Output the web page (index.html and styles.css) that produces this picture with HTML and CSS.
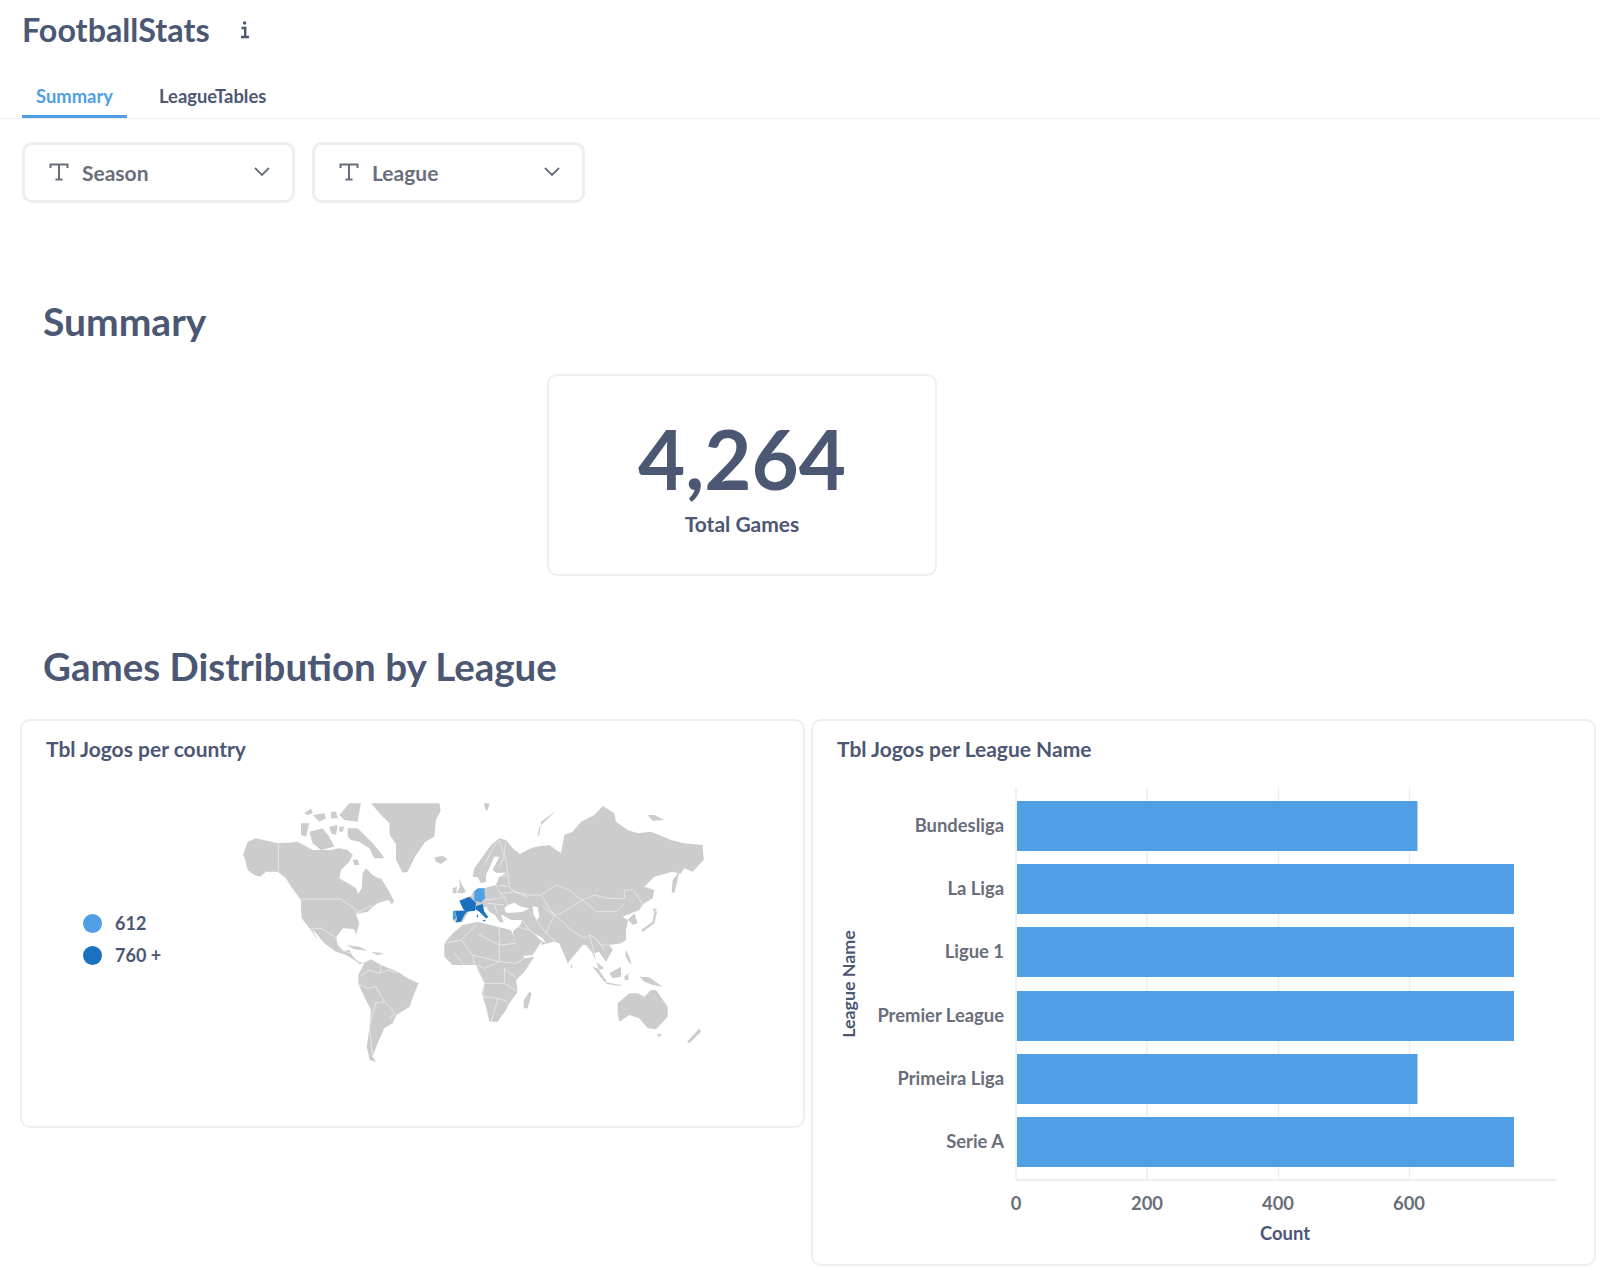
FILE: index.html
```html
<!DOCTYPE html>
<html lang="en">
<head>
<meta charset="utf-8">
<title>FootballStats</title>
<link rel="stylesheet" href="styles.css">
</head>
<body>
<header class="head">
  <div class="title-row">
    <h1 class="title">FootballStats</h1>
    <svg class="info" viewBox="0 0 10 18" width="10" height="18"><circle cx="4.6" cy="2" r="1.7"/><path d="M1.5 7H5.2V15.5M1 16H9" /></svg>
  </div>
  <nav class="tabs">
    <a class="tab active">Summary</a>
    <a class="tab">LeagueTables</a>
  </nav>
</header>
<section class="filters">
  <div class="filter">
    <svg class="t-icon" viewBox="0 0 20 18" width="20" height="18"><path d="M1.500 5V1.500H18.500V5M10 1.500V16.500M6.500 16.500H13.500"/></svg>
    <span class="filter-label">Season</span>
    <svg class="chev" viewBox="0 0 16 9" width="16" height="9"><path d="M1 1L8 8L15 1"/></svg>
  </div>
  <div class="filter">
    <svg class="t-icon" viewBox="0 0 20 18" width="20" height="18"><path d="M1.500 5V1.500H18.500V5M10 1.500V16.500M6.500 16.500H13.500"/></svg>
    <span class="filter-label">League</span>
    <svg class="chev" viewBox="0 0 16 9" width="16" height="9"><path d="M1 1L8 8L15 1"/></svg>
  </div>
</section>
<h2 class="section first">Summary</h2>
<div class="kpi-row">
  <div class="kpi">
    <div class="kpi-num">4,264</div>
    <div class="kpi-label">Total Games</div>
  </div>
</div>
<h2 class="section second">Games Distribution by League</h2>
<div class="cards">
  <article class="card map-card">
    <h3 class="card-title">Tbl Jogos per country</h3>
    <div class="map-body">
      <ul class="legend">
        <li class="legend-row"><span class="dot light"></span>612</li>
        <li class="legend-row"><span class="dot dark"></span>760 +</li>
      </ul>
      <svg class="map" viewBox="0 0 1500 870" width="500" height="290">
        <g class="land">
          <!-- North America -->
          <path d="M80 185L105 175L170 190L200 188L230 185L275 210L330 210L355 205L380 210L395 225L385 245L360 270L355 295L390 315L405 325L412 342L422 325L425 280L435 265L455 285L472 295L480 295L505 335L520 365L500 360L470 370L455 380L440 395L405 402L415 430L405 465L412 476L398 447L366 445L346 470L350 495L366 512L385 510L395 528L412 546L430 548L415 552L400 540L375 525L345 515L310 490L285 460L272 445L292 482L268 448L242 415L240 385L240 360L210 320L195 295L170 275L135 275L90 315L118 290L100 285L80 270L70 230L66 225Z"/>
          <!-- Arctic Canada -->
          <path d="M380 145L410 145L455 190L480 220L490 235L460 235L445 205L415 185L390 180L380 170Z"/>
          <path d="M265 155L305 145L325 170L340 200L300 210L275 190Z"/>
          <path d="M240 130L265 130L255 170L240 165Z"/>
          <path d="M250 100L270 85L275 100L260 105Z"/>
          <path d="M275 105L310 100L315 115L295 125Z"/>
          <path d="M330 95L345 95L350 115L330 115Z"/>
          <path d="M385 70H420L415 95L410 125L370 120L355 105Z"/>
          <path d="M325 140L350 135L345 165L330 160Z"/>
          <path d="M355 140L370 140L365 155L355 155Z"/>
          <path d="M395 240L410 238L415 255L400 255Z"/>
          <path d="M500 355L520 365L512 372Z"/>
          <!-- Greenland, Iceland, Svalbard -->
          <path d="M450 70H655L659 92L645 120L640 170L612 186L582 230L560 275L545 278L525 240L525 192L506 165L505 130L480 105Z"/>
          <path d="M640 232L665 228L680 238L660 252L645 245Z"/>
          <path d="M788 70H806L800 90L795 92Z"/>
          <!-- South America -->
          <path d="M430 548L450 538L480 555L530 575L560 595L593 610L580 640L566 680L526 705L515 730L490 745L470 790L455 830L466 846L446 840L437 800L446 740L450 690L430 650L412 612L412 585Z"/>
          <!-- Caribbean -->
          <path d="M375 495L415 500L440 512L400 508Z"/><path d="M450 515L490 520L470 526Z"/>
          <!-- Eurasia -->
          <path d="M695 395L740 388L715 363L750 348L760 330L790 325L825 315L835 290L845 285L855 278L825 278L815 270L835 230L820 230L795 285L795 305L780 310L770 292L755 290L760 265L785 230L810 195L835 175L855 180L875 205L900 225L880 245L870 250L900 220L930 205L945 200L985 195L1020 220L1030 165L1055 155L1080 125L1120 105L1145 78L1180 100L1185 125L1220 150L1250 160L1290 155L1315 165L1350 180L1390 190L1445 195L1448 240L1415 275L1390 265L1378 282L1355 275L1300 290L1270 320L1300 330L1295 355L1270 370L1255 390L1205 410L1220 420L1240 400L1250 430L1235 435L1222 420L1215 450L1215 480L1200 490L1165 495L1175 510L1155 545L1140 525L1135 515L1120 520L1125 545L1150 565L1135 570L1115 520L1095 495L1085 495L1040 550L1015 490L1000 485L960 495L965 480L935 525L905 528L885 498L875 455L900 432L902 420L870 420L845 405L840 405L848 428L835 425L822 405L805 395L795 380L770 385L745 392L740 400L725 425L705 428L695 420Z"/>
          <!-- Africa -->
          <path d="M670 490L695 460L725 435L770 425L830 440L870 450L885 490L910 535L940 530L910 575L885 600L890 635L865 670L855 690L830 725L805 725L795 680L782 640L790 610L772 575L765 555L730 555L695 555L670 530Z"/>
          <path d="M925 635L932 640L920 685L908 685L908 660Z"/>
          <!-- British Isles -->
          <path d="M715 295L722 312L735 335L725 340L708 338L716 322Z"/><path d="M695 325L708 320L706 340L695 340Z"/>
          <!-- Asia islands -->
          <path d="M1375 275L1360 340L1352 335L1355 300Z"/>
          <path d="M1260 450L1295 425L1300 395L1308 395L1300 430L1265 455Z"/>
          <path d="M1295 385L1308 388L1300 398Z"/>
          <path d="M1115 560L1130 565L1158 605L1150 605Z"/>
          <path d="M1165 580L1200 560L1200 590L1175 595Z"/>
          <path d="M1155 607L1200 615L1200 618L1155 612Z"/>
          <path d="M1210 590L1222 580L1222 600L1212 600Z"/>
          <path d="M1255 590L1285 592L1325 620L1295 615L1270 605Z"/>
          <path d="M1215 510L1225 530L1232 555L1222 545L1213 525Z"/>
          <path d="M1280 105L1300 105L1330 120L1295 122Z"/>
          <path d="M950 170L955 140L1005 92L960 125L955 165Z"/>
          <path d="M1050 552L1056 560L1050 565Z"/>
          <!-- Oceania -->
          <path d="M1190 670L1225 640L1250 640L1270 650L1290 630L1305 630L1340 680L1340 710L1305 748L1280 745L1255 715L1225 705L1195 725L1190 700Z"/>
          <path d="M1308 762L1322 762L1315 772Z"/>
          <path d="M1435 745L1440 755L1405 790L1398 785L1420 762Z"/>
        </g>
        <g class="holes">
          <path d="M850 385L860 375L880 368L900 380L925 385L905 395L875 398L855 398Z"/>
          <path d="M935 378L950 382L955 410L948 420L938 405Z"/>
          <path d="M940 460L965 475L975 490L955 478Z"/>
        </g>
        <g class="borders">
          <path d="M172 190V275M240 357H360L405 390V400L455 375M270 445H300L340 470L366 512M366 512L395 522"/>
          <path d="M415 590L445 570L475 580L500 570L530 578M440 625L465 620L490 665L515 690L522 705M465 665L445 740L455 830M490 665L465 670M412 612L440 625M480 555L478 580M505 715L520 705"/>
          <path d="M790 255L815 205L835 180L850 230L835 260M855 180L850 215L860 270L865 320L880 335"/>
          <path d="M825 315L838 340L850 350L860 375M790 360L835 355L850 350M800 370L850 375M820 375L830 400M840 290L860 285M835 315L860 320M840 340L880 335L920 350"/>
          <path d="M880 335L925 345L960 345L1005 315L1045 330L1075 355L1085 360L1120 345L1160 355L1210 355L1210 330L1235 330L1265 370L1255 395M1085 360L1125 395L1185 395L1210 370M1085 360L1060 375L1020 400L1000 405L1020 420L1050 450L1090 475L1105 465L1125 475L1140 495L1165 495M1000 405L975 460L1005 485M945 420L960 440L975 460M965 380L1000 405M905 420L925 450L945 465M885 440L925 450M960 345L985 385L1000 405M1105 465L1120 520M1125 475L1150 510"/>
          <path d="M670 490L720 480L755 525L760 555M720 480L770 430M775 465L835 495L885 490M835 440V545L790 565L770 555M755 525L835 545L885 550L910 535M765 555L790 610L850 610L890 635M790 610L785 650L830 655L860 665M830 655L820 695L810 725M850 610V565L885 595M700 520L730 555"/>
        </g>
        <g class="hi-dark">
          <path d="M715 362L745 350L765 368L762 392L735 395L725 385Z"/>
          <path d="M765 378L785 372L790 395L802 412L795 415L775 395L763 388Z"/>
          <path d="M785 420H794L790 425Z"/><path d="M768 400L772 412L767 412Z"/>
          <path d="M702 392L740 392L730 405L720 425L705 427L708 415Z"/>
        </g>
        <g class="hi-light">
          <path d="M760 335L770 325L790 325L792 355L780 367L760 362Z"/>
          <path d="M696 392L702 392L706 416L696 420Z"/>
        </g>
      </svg>
    </div>
  </article>
  <article class="card bar-card">
    <h3 class="card-title">Tbl Jogos per League Name</h3>
    <svg class="bars" viewBox="812 770 783 495" width="783" height="495">
      <g class="grid">
        <path d="M1016 788V1180M1147 788V1180M1278.500 788V1180M1409.500 788V1180"/>
        <path class="axis" d="M1016 1181H1556"/>
      </g>
      <g class="bar-fill">
        <rect x="1017" y="802" width="400.500" height="50"/>
        <rect x="1017" y="865" width="497" height="50"/>
        <rect x="1017" y="928" width="497" height="50"/>
        <rect x="1017" y="992" width="497" height="50"/>
        <rect x="1017" y="1055" width="400.500" height="50"/>
        <rect x="1017" y="1118" width="497" height="50"/>
      </g>
      <g class="y-labels">
        <text x="1004" y="833">Bundesliga</text>
        <text x="1004" y="896">La Liga</text>
        <text x="1004" y="959">Ligue 1</text>
        <text x="1004" y="1023">Premier League</text>
        <text x="1004" y="1086">Primeira Liga</text>
        <text x="1004" y="1149">Serie A</text>
      </g>
      <g class="x-labels">
        <text x="1016" y="1211">0</text>
        <text x="1147" y="1211">200</text>
        <text x="1278" y="1211">400</text>
        <text x="1409" y="1211">600</text>
      </g>
      <text class="axis-title" x="1285" y="1241">Count</text>
      <text class="axis-title side" transform="translate(855 985) rotate(-90)">League Name</text>
    </svg>
  </article>
</div>
</body>
</html>
```
FILE: styles.css
```css
* { box-sizing: border-box; }
html, body { margin: 0; padding: 0; background: #fff; }
body { font-family: Lato, "Liberation Sans", sans-serif; color: #4c5773; width: 1600px; height: 1270px; overflow: hidden; }
h1, h2, h3, ul { margin: 0; padding: 0; }

.head { border-bottom: 1px solid #eeeff1; height: 119px; padding-left: 22px; }
.title-row { display: flex; align-items: center; height: 60px; }
.title { font-size: 32.3px; font-weight: 700; line-height: 60px; }
.info { margin-left: 30px; fill: #4c5773; stroke: #4c5773; }
.info circle { stroke: none; }
.info path { fill: none; stroke-width: 2.4; }
.tabs { display: flex; gap: 18px; margin-top: 18px; }
.tab { font-size: 18.4px; font-weight: 700; height: 40px; line-height: 37px; padding: 0 14px; border-bottom: 3px solid transparent; }
.tab.active { color: #509ee3; border-bottom-color: #509ee3; }

.filters { display: flex; gap: 17px; padding: 23px 0 0 22px; }
.filter { width: 273px; height: 61px; border: 3px solid #eeeeee; border-radius: 10px; display: flex; align-items: center; padding: 0 22px 0 24px; color: #696e7b; }
.t-icon { fill: none; stroke: #696e7b; stroke-width: 2; margin-top: -2px; }
.filter-label { font-size: 21px; font-weight: 700; margin-left: 13px; flex: 1; }
.chev { fill: none; stroke: #696e7b; stroke-width: 1.8; margin-top: -3px; }

.section { font-weight: 700; padding-left: 43px; line-height: 46px; }
.section.first { font-size: 39px; margin-top: 95px; }
.section.second { font-size: 38.5px; margin-top: 67px; }

.kpi-row { margin: 30px 0 0 547px; }
.kpi { width: 390px; height: 202px; border: 2px solid #eeeff1; border-radius: 10px; display: flex; flex-direction: column; align-items: center; padding-top: 37px; }
.kpi-num { font-size: 81.500px; font-weight: 700; line-height: 92px; }
.kpi-label { font-size: 21px; font-weight: 700; line-height: 26px; margin-top: 6px; }

.cards { display: flex; align-items: flex-start; gap: 6px; margin: 30px 0 0 20px; }
.card { width: 785px; border: 2px solid #eeeff1; border-radius: 10px; padding: 15px 24px 0; }
.map-card { height: 409px; }
.bar-card { height: 547px; padding: 15px 0 0; }
.card-title { font-size: 21px; font-weight: 700; line-height: 26px; }
.bar-card .card-title { padding-left: 24px; }

.map-body { display: flex; align-items: flex-start; margin-top: 22px; margin-left: -24px; }
.legend { list-style: none; width: 207px; padding: 123px 0 0 61px; flex: none; }
.legend-row { display: flex; align-items: center; font-size: 18px; font-weight: 700; height: 32px; }
.dot { width: 19px; height: 19px; border-radius: 50%; margin-right: 13px; }
.dot.light { background: #509ee3; }
.dot.dark { background: #1a71c0; }
.map { flex: none; margin-top: -4px; margin-left: -8px; }
.land path { fill: #cccccc; }
.holes path { fill: #fff; }
.borders path { fill: none; stroke: #f2f2f2; stroke-width: 2; }
.hi-dark path { fill: #1a71c0; }
.hi-light path { fill: #509ee3; }

.bars { display: block; margin: 7px 0 0 -1px; font-family: Lato, "Liberation Sans", sans-serif; }
.grid path { stroke: #eeeeee; stroke-width: 1.5; fill: none; }
.grid .axis { stroke-width: 2; }
.bar-fill rect { fill: #509ee3; }
.y-labels text { text-anchor: end; font-size: 18.400px; font-weight: 700; fill: #696e7b; }
.x-labels text { text-anchor: middle; font-size: 18.400px; font-weight: 700; fill: #696e7b; }
.axis-title { text-anchor: middle; font-size: 18.400px; font-weight: 700; fill: #4c5773; }
.axis-title.side { font-size: 17.800px; }
```
